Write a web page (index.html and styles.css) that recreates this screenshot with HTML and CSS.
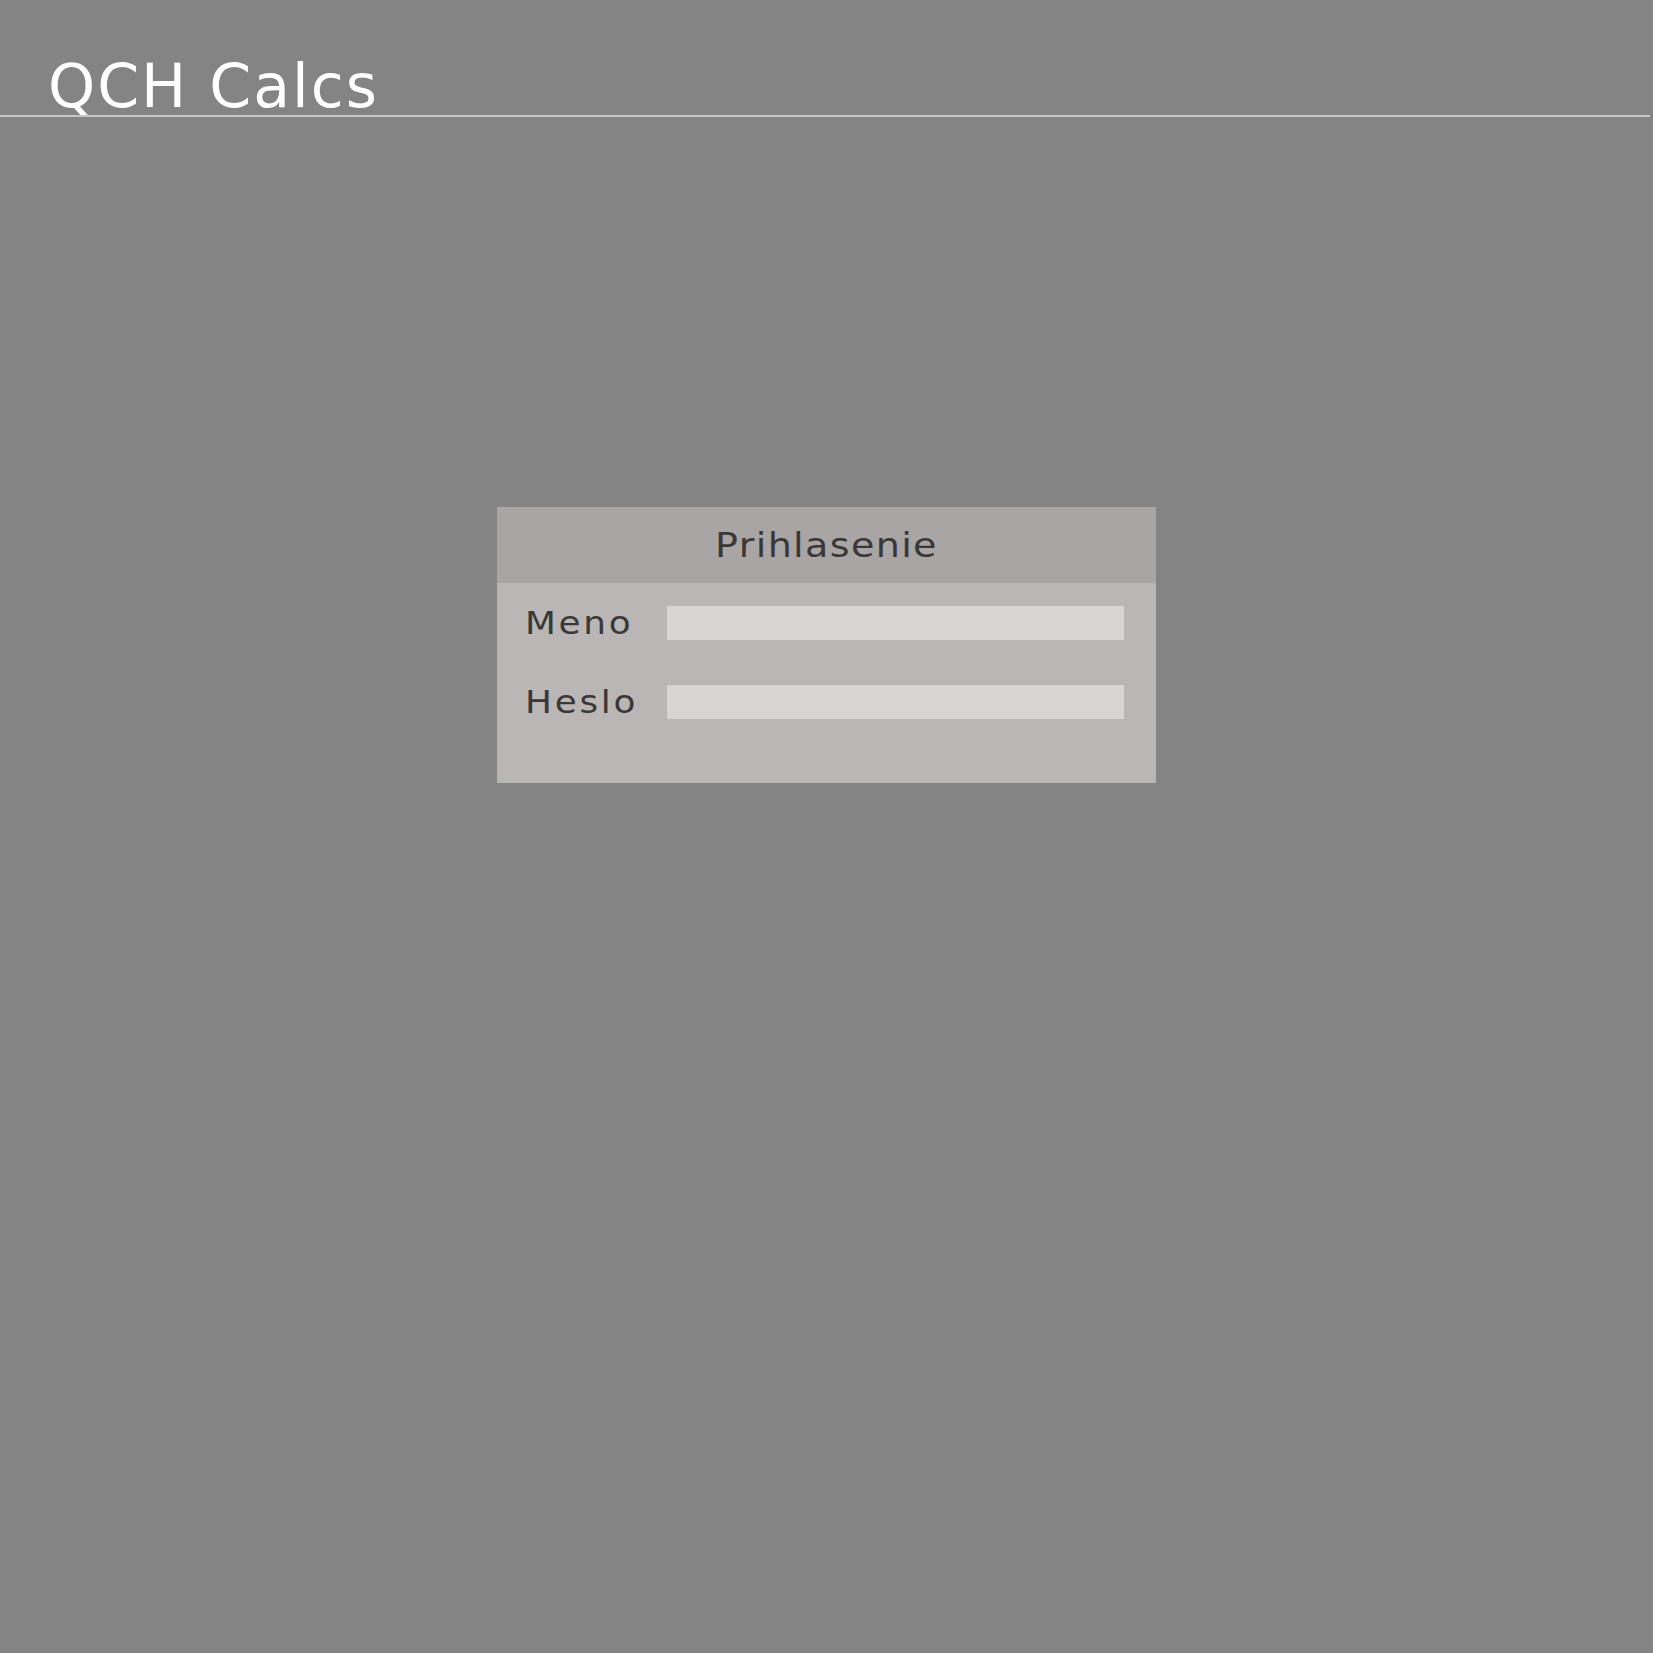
FILE: index.html
```html
<!DOCTYPE html>
<html lang="sk">
<head>
<meta charset="utf-8">
<title>QCH Calcs</title>
<link rel="stylesheet" href="styles.css">
</head>
<body>
<header class="topbar">
  <h1 class="brand">QCH Calcs</h1>
</header>
<main class="stage">
  <section class="login">
    <div class="login-head"><span class="head-text">Prihlasenie</span></div>
    <form class="login-body">
      <label class="field-label" for="meno">Meno</label>
      <input class="field-input" id="meno" type="text">
      <label class="field-label" for="heslo">Heslo</label>
      <input class="field-input" id="heslo" type="password">
    </form>
  </section>
</main>
</body>
</html>
```
FILE: styles.css
```css
html, body {
  margin: 0;
  padding: 0;
  background: #848484;
  font-family: "DejaVu Sans", Verdana, sans-serif;
}

.topbar {
  width: 1650px;
  border-bottom: 2px solid #c6c6c6;
}

.brand {
  margin: 0;
  padding: 57px 0 0 48px;
  font-size: 60px;
  font-weight: normal;
  line-height: 58px;
  color: #ffffff;
  letter-spacing: 2px;
}

.stage {
  display: flex;
  justify-content: center;
  padding-top: 390px;
}

.login {
  width: 659px;
  background: #bab6b5;
}

.login-head {
  height: 76px;
  line-height: 76px;
  background: #a9a5a4;
  text-align: center;
  color: #3a3737;
}

.head-text {
  display: inline-block;
  font-size: 34px;
  letter-spacing: 1.2px;
  transform: scaleX(1.12);
  transform-origin: center;
}

.login-body {
  display: grid;
  grid-template-columns: 142px 457px;
  row-gap: 45px;
  align-items: center;
  margin: 0;
  padding: 23px 32px 64px 28px;
}

.field-label {
  justify-self: start;
  font-size: 32px;
  letter-spacing: 2.4px;
  color: #3a3737;
  line-height: 34px;
  transform: scaleX(1.12);
  transform-origin: left center;
}

.field-input {
  height: 34px;
  box-sizing: border-box;
  margin: 0;
  border: none;
  padding: 0 8px;
  background: #d8d4d3;
  font-family: inherit;
  font-size: 20px;
}
```
